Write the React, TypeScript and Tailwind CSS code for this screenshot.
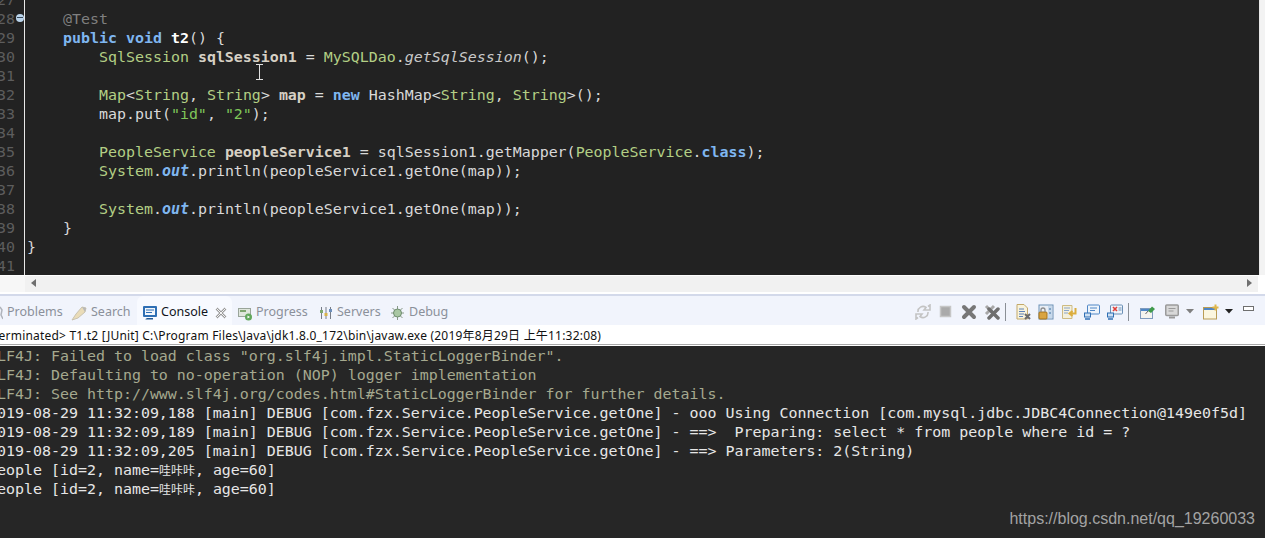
import React from "react";

const K = ({ children }: { children: React.ReactNode }) => <span className="font-bold text-[#7fb6f0]">{children}</span>;
const T = ({ children }: { children: React.ReactNode }) => <span className="text-[#b3cf85]">{children}</span>;
const V = ({ children }: { children: React.ReactNode }) => <span className="font-bold text-[#d6d0c4]">{children}</span>;
const S = ({ children }: { children: React.ReactNode }) => <span className="text-[#7fc65a]">{children}</span>;
const I = ({ children }: { children: React.ReactNode }) => <span className="italic text-[#c8c8c8]">{children}</span>;
const F = ({ children }: { children: React.ReactNode }) => <span className="font-bold italic text-[#7fb6f0]">{children}</span>;

const code: [string, React.ReactNode][] = [
  ["27", ""],
  ["28", <span className="text-[#7f7f7f]">{"    @Test"}</span>],
  ["29", <>{"    "}<K>public</K> <K>void</K> <span className="font-bold text-white">t2</span>{"() {"}</>],
  ["30", <>{"        "}<T>SqlSession</T> <V>sqlSession1</V> = <T>MySQLDao</T>.<I>getSqlSession</I>();</>],
  ["31", ""],
  ["32", <>{"        "}<T>Map</T>{"<"}<T>String</T>, <T>String</T>{"> "}<V>map</V> = <K>new</K> HashMap{"<"}<T>String</T>, <T>String</T>{">();"}</>],
  ["33", <>{"        map.put("}<S>"id"</S>, <S>"2"</S>{");"}</>],
  ["34", ""],
  ["35", <>{"        "}<T>PeopleService</T> <V>peopleService1</V> = sqlSession1.getMapper(<T>PeopleService</T>.<K>class</K>);</>],
  ["36", <>{"        "}<T>System</T>.<F>out</F>.println(peopleService1.getOne(map));</>],
  ["37", ""],
  ["38", <>{"        "}<T>System</T>.<F>out</F>.println(peopleService1.getOne(map));</>],
  ["39", "    }"],
  ["40", "}"],
  ["41", ""],
];

const consoleLines: [string, string][] = [
  ["SLF4J: Failed to load class \"org.slf4j.impl.StaticLoggerBinder\".", "text-[#a5a98f]"],
  ["SLF4J: Defaulting to no-operation (NOP) logger implementation", "text-[#a5a98f]"],
  ["SLF4J: See http://www.slf4j.org/codes.html#StaticLoggerBinder for further details.", "text-[#a5a98f]"],
  ["2019-08-29 11:32:09,188 [main] DEBUG [com.fzx.Service.PeopleService.getOne] - ooo Using Connection [com.mysql.jdbc.JDBC4Connection@149e0f5d]", "text-[#e6e6e6]"],
  ["2019-08-29 11:32:09,189 [main] DEBUG [com.fzx.Service.PeopleService.getOne] - ==>  Preparing: select * from people where id = ?", "text-[#e6e6e6]"],
  ["2019-08-29 11:32:09,205 [main] DEBUG [com.fzx.Service.PeopleService.getOne] - ==> Parameters: 2(String)", "text-[#e6e6e6]"],
];

const Person = () => (
  <div className="-ml-[12px] flex h-[19px] items-baseline text-[#e6e6e6]">
    <span className="whitespace-pre">People [id=2, name=</span>
    <span className="font-['Noto_Sans_CJK_SC',sans-serif] text-[12px] leading-[12px]">哇咔咔</span>
    <span className="whitespace-pre">, age=60]</span>
  </div>
);

const Ico = ({ children, w = 16 }: { children: React.ReactNode; w?: number }) => (
  <svg width={w} height="16" viewBox={`0 0 ${w} 16`} className="shrink-0">{children}</svg>
);

const Tab = ({ icon, label, className }: { icon?: React.ReactNode; label: string; className: string }) => (
  <div className={`flex items-center gap-[4px] pt-[2px] text-[12.5px] text-[#8b909a] ${className}`}>
    {icon}
    <span>{label}</span>
  </div>
);

const Sep = () => <div className="h-[18px] w-px shrink-0 bg-[#8a8f96]" />;

export default function App() {
  const mono = "font-['DejaVu_Sans_Mono','Noto_Sans_CJK_SC',monospace]";
  return (
    <div className={`relative flex h-[538px] w-[1265px] flex-col overflow-hidden bg-white ${mono}`}>
      {/* editor */}
      <div className="flex h-[275px] shrink-0 overflow-hidden bg-[#222222] text-[14.95px] leading-[19px]">
        <div className="-mt-[9px] -ml-[3px] w-[27px] shrink-0 self-stretch">
          {code.map(([n]) => (
            <div key={n} className="relative h-[19px] text-[#5d5d5d]">
              {n}
              {n === "28" && (
                <span className="absolute left-[19px] top-[4px] h-[8px] w-[8px] rounded-full bg-[#b9d3ea]">
                  <span className="absolute left-[1px] top-[3px] h-[1px] w-[6px] bg-[#37485a]" />
                </span>
              )}
            </div>
          ))}
        </div>
        <div className="w-px shrink-0 bg-[#e8e8e8]" />
        <div className="-mt-[9px] flex-1 whitespace-pre pl-[2px] text-[#d9d9d9]">
          {code.map(([n, c]) => (
            <div key={n} className="h-[19px]">{c}</div>
          ))}
        </div>
        <div className="w-px shrink-0 bg-[#e8e8e8]" />
        <div className="w-[5px] shrink-0 bg-[#f3f3f3]" />
      </div>
      {/* horizontal scrollbar */}
      <div className="flex h-[17px] shrink-0 border-t border-white bg-white">
        <div className="w-[25px] shrink-0 bg-[#f7f7f7]" />
        <div className="flex w-[1233px] items-center justify-between bg-[#f1f1f1] px-[6px] pb-[2px]">
          <svg width="5" height="8" viewBox="0 0 5 8"><path d="M5 0 L0 4 L5 8Z" fill="#6f6f6f" /></svg>
          <svg width="5" height="8" viewBox="0 0 5 8"><path d="M0 0 L5 4 L0 8Z" fill="#6f6f6f" /></svg>
        </div>
      </div>
      <div className="h-[2px] shrink-0 bg-white" />
      <div className="h-[2px] shrink-0 bg-[#d3d9ea]" />
      {/* view tabs + toolbar */}
      <div className="flex h-[29px] shrink-0 items-center bg-[#f1f4fc] pt-[2px] font-['Noto_Sans','Noto_Sans_CJK_SC',sans-serif]">
        <Tab
          className="w-[71px]"
          label="Problems"
          icon={
            <svg width="3" height="14" viewBox="0 0 3 14" className="shrink-0">
              <path d="M0 1 L2 4 L1 9 L3 13" fill="none" stroke="#b0b4bc" strokeWidth="1.500" />
            </svg>
          }
        />
        <Tab
          className="w-[66px]"
          label="Search"
          icon={
            <Ico>
              <path d="M1 15 L5 9 L11 2 L15 3 L14 7 L7 13Z" fill="#eadcb8" stroke="#c9c3b0" />
              <path d="M11 2 L15 3 L14 7Z" fill="#b8b8b8" />
            </Ico>
          }
        />
        <div className="-mt-[2px] flex h-[29px] w-[95px] shrink-0 items-center rounded-t-[6px] bg-[#f8faff] pl-[5px] pt-[4px] text-[12.5px] text-[#10141c]">
          <Ico>
            <rect x="1" y="1" width="14" height="11" rx="1" fill="#2f6fb4" />
            <rect x="3" y="3" width="10" height="7" fill="#f3f7fc" />
            <path d="M4 5h8M4 7.5h6" stroke="#2f6fb4" />
            <path d="M5 13h6v1.5H3.500V14Z" fill="#245a94" />
          </Ico>
          <span className="ml-[3px]">Console</span>
          <svg width="12" height="12" viewBox="0 0 12 12" className="ml-[7px]">
            <path d="M1.500 1.500 L10.500 10.500 M10.500 1.500 L1.500 10.500" stroke="#9a9a9a" strokeWidth="2.600" />
            <path d="M1.500 1.500 L10.500 10.500 M10.500 1.500 L1.500 10.500" stroke="#f4f4f4" strokeWidth="1" />
          </svg>
        </div>
        <Tab
          className="ml-[6px] w-[81px]"
          label="Progress"
          icon={
            <Ico w={14}>
              <rect x="0.500" y="3.500" width="12" height="8" fill="#dfe6dc" stroke="#9aa59a" />
              <rect x="2" y="5" width="6" height="2" fill="#7fa56f" />
              <circle cx="10.500" cy="12" r="3.500" fill="#62a85c" />
              <path d="M9.500 10.500 L12 12 L9.500 13.500Z" fill="#fff" />
            </Ico>
          }
        />
        <Tab
          className="w-[71px]"
          label="Servers"
          icon={
            <Ico w={14}>
              <path d="M2.500 2v12M7 2v12M11.500 2v12" stroke="#777d88" />
              <rect x="1" y="5" width="3" height="3" fill="#7ea86e" />
              <rect x="5.500" y="8" width="3" height="3" fill="#d9b44a" />
              <rect x="10" y="4" width="3" height="3" fill="#6d8fbb" />
            </Ico>
          }
        />
        <Tab
          className="w-[80px]"
          label="Debug"
          icon={
            <Ico w={15}>
              <path d="M7.500 1v14M1 8h13M2.500 3l10 10M12.500 3l-10 10" stroke="#8a9a8a" />
              <circle cx="7.500" cy="8" r="4" fill="#a9c7a3" stroke="#6f8d6f" />
            </Ico>
          }
        />
        {/* toolbar */}
        <div className="ml-auto flex w-[351px] items-center gap-[7px] pl-[1px]">
          <Ico>
            <path d="M3 8 A5 5 0 0 1 11 3.500 L9 6 H15 V1 L13 2.500" fill="none" stroke="#c3c3c3" strokeWidth="1.600" />
            <path d="M13 8 A5 5 0 0 1 5 12.500 L7 10 H1 V15 L3 13.500" fill="none" stroke="#c3c3c3" strokeWidth="1.600" />
          </Ico>
          <Ico>
            <rect x="2.500" y="2.500" width="10" height="10" fill="#aaaaaa" stroke="#c6c6c6" strokeWidth="1.500" />
          </Ico>
          <Ico>
            <path d="M3 3 L13 13 M13 3 L3 13" stroke="#777777" strokeWidth="4" strokeLinecap="round" />
          </Ico>
          <Ico>
            <path d="M2 2 L10 10 M10 2 L2 10" stroke="#a8a8a8" strokeWidth="3" />
            <path d="M5 5 L14 14 M14 5 L5 14" stroke="#6f6f6f" strokeWidth="3.500" strokeLinecap="round" />
          </Ico>
          <div className="-mx-[2px]"><Sep /></div>
          <div className="ml-[4px]">
            <Ico>
              <path d="M2 .5H9L12.500 4V15H2Z" fill="#f8f3dd" stroke="#c3a96a" />
              <path d="M4 5h5M4 7.500h6M4 10h5M4 12.500h4" stroke="#5f82b8" />
              <path d="M10 10 L15 15 M15 10 L10 15" stroke="#6b6b6b" strokeWidth="2" />
            </Ico>
          </div>
          <Ico>
            <rect x="1" y="1" width="14" height="14" fill="#e9eef5" stroke="#6b8fb5" />
            <rect x="10" y="2" width="4" height="12" fill="#c7d9ec" />
            <path d="M11 5h2M11 9h2" stroke="#3f6e9e" />
            <rect x="1" y="8" width="8" height="7" rx="1" fill="#d9a441" stroke="#a3721c" />
            <path d="M3 8 V6 a2 2 0 0 1 4 0 V8" fill="none" stroke="#8c8c8c" strokeWidth="1.300" />
          </Ico>
          <Ico>
            <path d="M1.500 1.500H11V14.500H1.500Z" fill="#f4f0dc" stroke="#cdbb83" />
            <path d="M3 4h6M3 6.500h5M3 9h4" stroke="#8aa5c9" />
            <path d="M14.500 4 V9.500 H9.500 M11.500 7 L8.500 9.500 L11.500 12" fill="none" stroke="#dcae3e" strokeWidth="2" />
          </Ico>
          <Ico>
            <rect x="3.500" y="1" width="12" height="9" rx="1" fill="#eef4fb" stroke="#4f86c6" />
            <path d="M6 4h7M6 6.500h5" stroke="#4f86c6" />
            <rect x="0.500" y="9" width="6" height="4" fill="#cfe0f2" stroke="#2f6fb4" />
            <path d="M1 15h5" stroke="#2f6fb4" strokeWidth="1.500" />
          </Ico>
          <Ico>
            <rect x="3.500" y="1" width="12" height="9" rx="1" fill="#eef4fb" stroke="#6b8fb5" />
            <path d="M6 3 L10 7 M10 3 L6 7" stroke="#e0403a" strokeWidth="1.600" />
            <path d="M11.500 4h3M11.500 6h3" stroke="#6b8fb5" />
            <rect x="0.500" y="9" width="6" height="4" fill="#cfe0f2" stroke="#2f6fb4" />
            <path d="M1 15h5" stroke="#2f6fb4" strokeWidth="1.500" />
          </Ico>
          <div className="-mx-[2px]"><Sep /></div>
          <div className="ml-[6px]">
            <Ico>
              <rect x="0.500" y="4.500" width="12" height="10" fill="#f4f4ee" stroke="#7e9bbd" />
              <rect x="1" y="5" width="11" height="2" fill="#4f86c6" />
              <path d="M8 7 L12 2.500 L15 5 L11 9Z" fill="#3f9a4a" />
              <path d="M8 7 L5.500 10" stroke="#666" />
            </Ico>
          </div>
          <div className="ml-[2px]">
            <Ico w={14}>
              <rect x="0.750" y="1" width="12.500" height="10.500" rx="1" fill="#d8d8d8" stroke="#9a9a9a" strokeWidth="1.500" />
              <path d="M3.500 4.500h7M3.500 7h5" stroke="#9a9a9a" />
              <path d="M4 13.500h6" stroke="#9a9a9a" strokeWidth="2" />
            </Ico>
          </div>
          <svg width="8" height="5" viewBox="0 0 8 5" className="shrink-0"><path d="M0 0h8L4 4.500Z" fill="#7f7f7f" /></svg>
          <div className="ml-[2px]">
            <Ico>
              <rect x="0.500" y="3.500" width="13" height="11.500" fill="#fbf6df" stroke="#b99c55" />
              <rect x="1" y="4" width="12" height="2" fill="#4f86c6" />
              <path d="M12.500 0.500v6M9.500 3.500h6" stroke="#e0b64a" strokeWidth="2" />
            </Ico>
          </div>
          <svg width="8" height="5" viewBox="0 0 8 5" className="-ml-[1px] shrink-0"><path d="M0 0h8L4 4.500Z" fill="#222222" /></svg>
          <div className="-mt-[7px] ml-[3px] h-[5px] w-[11px] shrink-0 border border-[#6f6f6f] bg-white" />
        </div>
      </div>
      {/* status */}
      <div className="h-[19px] shrink-0 overflow-hidden bg-white pt-px font-['Noto_Sans','Noto_Sans_CJK_SC',sans-serif] text-[12px] leading-[19px] tracking-[0.2px] whitespace-pre text-[#111111]">
        <span className="-ml-[13px] inline-block">{"<terminated> T1.t2 [JUnit] C:\\Program Files\\Java\\jdk1.8.0_172\\bin\\javaw.exe (2019年8月29日 上午11:32:08)"}</span>
      </div>
      <div className="h-px shrink-0 bg-[#a8a8a8]" />
      <div className="h-px shrink-0 bg-white" />
      {/* console */}
      <div className="flex-1 overflow-hidden bg-[#262626] pt-[1px] text-[14.95px] leading-[19px] whitespace-pre">
        {consoleLines.map(([t, c], i) => (
          <div key={i} className={`-ml-[12px] h-[19px] ${c}`}>{t}</div>
        ))}
        <Person />
        <Person />
      </div>
      {/* watermark */}
      <div className="absolute right-[10px] top-[509px] font-['Liberation_Sans',sans-serif] text-[16px] leading-[20px] text-[#a3a3a3]">
        https://blog.csdn.net/qq_19260033
      </div>
      {/* I-beam cursor */}
      <svg width="9" height="16" viewBox="0 0 9 16" className="absolute left-[255px] top-[64px]">
        <path d="M1 .5h7M1 15.500h7M4.500 .5v15" stroke="#e0e0e0" />
      </svg>
    </div>
  );
}
